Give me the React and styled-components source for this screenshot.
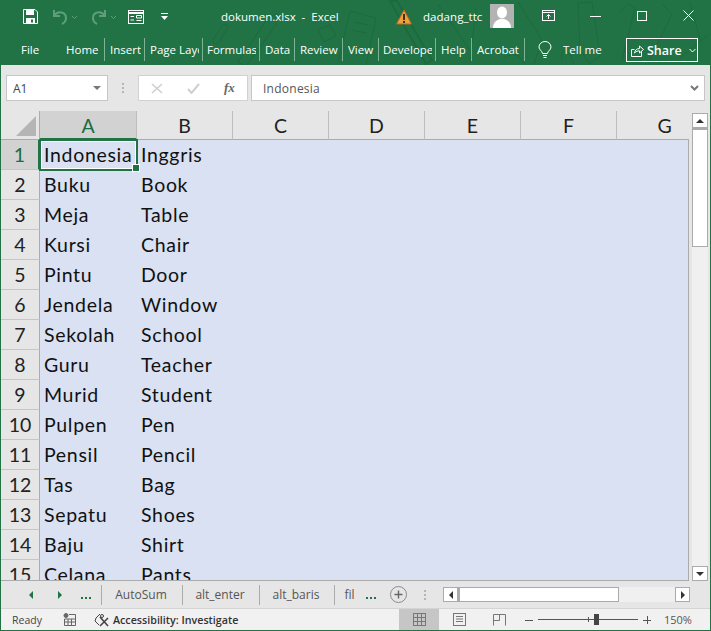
import styled, { createGlobalStyle } from 'styled-components';

const GlobalStyle = createGlobalStyle`
  html, body { margin: 0; padding: 0; background: #217346; }
  * { box-sizing: border-box; }
`;

const Window = styled.div`
  position: relative;
  width: 711px;
  height: 631px;
  display: flex;
  flex-direction: column;
  background: #217346;
  font-family: 'Open Sans', 'Noto Sans', sans-serif;
  overflow: hidden;
`;

const Doodles = styled.svg`
  position: absolute;
  left: 0;
  top: 0;
  pointer-events: none;
`;

const TitleBar = styled.div`
  position: relative;
  height: 33px;
  display: flex;
  align-items: center;
  color: #fff;
  flex: none;
`;

const QuickTools = styled.div`
  display: flex;
  align-items: center;
  flex: none;
  width: 221px;
  padding-left: 23px;
  height: 100%;
`;

const ToolSlot = styled.div`
  display: flex;
  align-items: center;
  flex: none;
  margin-left: ${({ $gap }) => $gap || 0}px;
`;

const TitleText = styled.div`
  width: 175px;
  flex: none;
  font-size: 11.5px;
  white-space: pre;
  color: #fff;
  margin-top: -1px;
`;

const UserName = styled.div`
  width: 67px;
  flex: none;
  font-size: 11.5px;
  margin-left: 11px;
  color: #fff;
  letter-spacing: 0.05px;
`;

const Avatar = styled.div`
  width: 24px;
  height: 24px;
  flex: none;
  background: #b3b3b3;
  overflow: hidden;
  margin-top: -2px;
`;

const WindowButtons = styled.div`
  display: flex;
  align-items: center;
  flex: none;
  margin-left: 10px;
  margin-top: -2px;
`;

const WinBtn = styled.div`
  width: ${({ $w }) => $w || 46}px;
  display: flex;
  justify-content: center;
`;

const Ribbon = styled.div`
  position: relative;
  height: 32px;
  display: flex;
  align-items: flex-start;
  flex: none;
  padding-top: 5px;
`;

const FileTab = styled.div`
  width: 66px;
  flex: none;
  padding-left: 21px;
  color: #fff;
  font-size: 11.5px;
  line-height: 23px;
`;

const RibbonTab = styled.div`
  width: ${({ $w }) => $w}px;
  flex: none;
  height: 23px;
  line-height: 23px;
  color: #fff;
  font-size: 11.5px;
  padding-left: ${({ $pl }) => $pl ?? 5}px;
  padding-right: 3px;
  border-right: 1px solid #7fb396;
`;

const TabLabel = styled.div`
  white-space: nowrap;
  overflow: hidden;
`;

const TellMe = styled.div`
  display: flex;
  align-items: center;
  flex: none;
  height: 23px;
  color: #fff;
  font-size: 11.5px;
  margin-left: 13px;
  gap: 11px;
  width: 88px;
`;

const ShareBtn = styled.div`
  width: 72px;
  flex: none;
  height: 24px;
  border: 1px solid #fff;
  display: flex;
  align-items: center;
  padding-left: 4px;
  gap: 3px;
  color: #fff;
  font-size: 12.5px;
  font-weight: 600;
`;

const Body = styled.div`
  flex: 1;
  margin: 0 1px 1px 1px;
  background: #e6e6e6;
  display: flex;
  flex-direction: column;
  min-height: 0;
  position: relative;
`;

const FormulaBar = styled.div`
  height: 46px;
  flex: none;
  display: flex;
  align-items: flex-start;
  padding: 10px 0 0 5px;
`;

const NameBox = styled.div`
  width: 102px;
  height: 26px;
  background: #fff;
  border: 1px solid #c6c6c6;
  display: flex;
  align-items: center;
  justify-content: space-between;
  padding: 0 6px;
  font-size: 12px;
  color: #444;
`;

const Caret = styled.div`
  width: 0;
  height: 0;
  border-left: 4px solid transparent;
  border-right: 4px solid transparent;
  border-top: 4px solid #777;
`;

const Dots = styled.div`
  width: 30px;
  height: 26px;
  flex: none;
  display: flex;
  flex-direction: column;
  align-items: center;
  justify-content: center;
  gap: 2px;
  & > span { width: 2px; height: 2px; background: #b5b5b5; }
`;

const TabDots = styled(Dots)`
  width: 36px;
  height: 16px;
`;

const FxBox = styled.div`
  width: 110px;
  height: 26px;
  background: #fff;
  border: 1px solid #d2d2d2;
  display: flex;
  align-items: center;
  padding-left: 12px;
  gap: 24px;
`;

const FxLabel = styled.span`
  font-family: 'Liberation Serif', serif;
  font-style: italic;
  font-weight: 700;
  font-size: 13px;
  color: #666;
`;

const FormulaInput = styled.div`
  width: 454px;
  height: 26px;
  margin-left: 3px;
  background: #fff;
  border: 1px solid #c6c6c6;
  display: flex;
  align-items: center;
  justify-content: space-between;
  padding: 0 5px 0 11px;
  font-size: 12px;
  color: #555;
  letter-spacing: 0.25px;
`;

const SheetArea = styled.div`
  height: 470px;
  flex: none;
  display: flex;
`;

const GridWrap = styled.div`
  position: relative;
  width: 688px;
  height: 470px;
  overflow: hidden;
  display: grid;
  grid-template-columns: 39px 97px 96px 96px 96px 96px 96px 96px;
  grid-auto-rows: 30px;
  grid-template-rows: 29px;
  font-family: Lato, 'Liberation Sans', sans-serif;
  flex: none;
  border-bottom: 1px solid #ababab;
  &::after {
    content: '';
    position: absolute;
    right: 0;
    top: 28px;
    bottom: 0;
    width: 1px;
    background: #ababab;
    z-index: 2;
  }
`;

const Corner = styled.div`
  background: #e6e6e6;
  border-right: 1px solid #ababab;
  border-bottom: 1px solid #ababab;
  display: flex;
  align-items: flex-end;
  justify-content: flex-end;
  padding: 0 3px 3px 0;
  &::after {
    content: '';
    width: 0;
    height: 0;
    border-left: 20px solid transparent;
    border-bottom: 20px solid #b5b5b5;
  }
`;

const ColHead = styled.div`
  background: ${({ $active }) => ($active ? '#d2d2d2' : '#e6e6e6')};
  border-right: 1px solid ${({ $last }) => ($last ? 'transparent' : '#bdbdbd')};
  border-bottom: ${({ $active }) => ($active ? '2px solid #217346' : '1px solid #ababab')};
  color: ${({ $active }) => ($active ? '#1c6b41' : '#222')};
  font-size: 19.5px;
  line-height: 29px;
  text-align: center;
`;

const RowHead = styled.div`
  background: ${({ $active }) => ($active ? '#d2d2d2' : '#e6e6e6')};
  border-right: ${({ $active }) => ($active ? '2px solid #217346' : '1px solid #ababab')};
  border-bottom: 1px solid #c6c6c6;
  color: ${({ $active }) => ($active ? '#1c6b41' : '#222')};
  font-size: 19.5px;
  line-height: 30px;
  text-align: center;
`;

const Cell = styled.div`
  position: relative;
  background: #d9e1f2;
  color: #111;
  font-size: 19.5px;
  line-height: 30px;
  padding-left: 4px;
  white-space: nowrap;
  letter-spacing: 0.68px;
`;

const ActiveCell = styled(Cell)`
  outline: 2px solid #217346;
  outline-offset: -1px;
  z-index: 1;
  overflow: visible;
  box-shadow: inset 0 0 0 2px #fff;
  &::after {
    content: '';
    position: absolute;
    right: -3px;
    bottom: -2px;
    width: 6px;
    height: 6px;
    background: #217346;
    border: 1px solid #fff;
  }
`;

const VScroll = styled.div`
  width: 16px;
  margin-left: 3px;
  padding-top: 2px;
  display: flex;
  flex-direction: column;
  flex: none;
`;

const ScrollBtn = styled.div`
  height: 15px;
  background: #fff;
  border: 1px solid #ababab;
  display: flex;
  align-items: center;
  justify-content: center;
  flex: none;
`;

const VThumb = styled.div`
  height: 119px;
  background: #fff;
  border: 1px solid #ababab;
  border-top-width: 2px;
  flex: none;
`;

const VTrack = styled.div`
  flex: 1;
  background: #f0f0f0;
`;

const Spacer = styled.div`
  flex: 1;
`;

const TabsBar = styled.div`
  height: 27px;
  flex: none;
  display: flex;
  align-items: center;
  background: #e6e6e6;
  padding-right: 20px;
`;

const NavArrows = styled.div`
  width: 100px;
  flex: none;
  display: flex;
  align-items: center;
  padding-left: 28px;
`;

const Ellipsis = styled.div`
  display: flex;
  flex: none;
  gap: 2px;
  width: 10px;
  margin-top: 6px;
  & > span { width: 2px; height: 2px; background: #217346; }
`;

const SheetTab = styled.div`
  height: 20px;
  width: ${({ $w }) => $w}px;
  flex: none;
  border-left: 1px solid #ababab;
  font-size: 12px;
  line-height: 19px;
  padding-right: 2px;
  color: #555;
  text-align: center;
  white-space: nowrap;
  overflow: hidden;
`;

const AddSheet = styled.div`
  width: 17px;
  height: 17px;
  flex: none;
  border: 1px solid #8a8a8a;
  border-radius: 50%;
  color: #666;
  display: flex;
  align-items: center;
  justify-content: center;
  margin-left: 14px;
`;

const HScroll = styled.div`
  flex: 1;
  height: 15px;
  display: flex;
  background: #f0f0f0;
`;

const HBtn = styled.div`
  width: 15px;
  height: 15px;
  background: #fff;
  border: 1px solid #ababab;
  display: flex;
  align-items: center;
  justify-content: center;
  flex: none;
`;

const HThumb = styled.div`
  width: 161px;
  height: 15px;
  background: #fff;
  border: 1px solid #ababab;
  border-left-width: 2px;
  flex: none;
`;

const StatusBar = styled.div`
  height: 22px;
  flex: none;
  background: #f1f1f1;
  border-top: 1px solid #d4d4d4;
  display: flex;
  align-items: center;
  font-size: 10.5px;
  color: #444;
`;

const ReadyText = styled.div`
  width: 62px;
  flex: none;
  padding-left: 11px;
`;

const AccessText = styled.div`
  font-size: 10.7px;
  font-weight: 600;
  color: #333;
  margin-left: 3px;
  width: 286px;
  flex: none;
`;

const ViewBtn = styled.div`
  width: 40px;
  flex: none;
  height: 100%;
  display: flex;
  align-items: center;
  justify-content: center;
  background: ${({ $active }) => ($active ? '#c6c6c6' : 'transparent')};
`;

const Zoom = styled.div`
  display: flex;
  align-items: center;
  flex: none;
  margin-left: 6px;
  gap: 5px;
`;

const ZoomTrack = styled.div`
  position: relative;
  width: 100px;
  height: 1px;
  background: #555;
`;

const ZoomThumb = styled.div`
  position: absolute;
  left: 56px;
  top: -5px;
  width: 5px;
  height: 11px;
  background: #444;
`;

const ZoomTick = styled.div`
  position: absolute;
  left: 50px;
  top: -2px;
  width: 1px;
  height: 5px;
  background: #555;
`;

const ZoomValue = styled.div`
  margin-left: 13px;
  font-size: 11px;
  color: #555;
  flex: none;
`;

const rows = [
  ['Indonesia', 'Inggris'], ['Buku', 'Book'], ['Meja', 'Table'], ['Kursi', 'Chair'],
  ['Pintu', 'Door'], ['Jendela', 'Window'], ['Sekolah', 'School'], ['Guru', 'Teacher'],
  ['Murid', 'Student'], ['Pulpen', 'Pen'], ['Pensil', 'Pencil'], ['Tas', 'Bag'],
  ['Sepatu', 'Shoes'], ['Baju', 'Shirt'], ['Celana', 'Pants'],
];
const cols = ['A', 'B', 'C', 'D', 'E', 'F', 'G'];
const tabs = [
  ['Home', 39, 0], ['Insert', 40], ['Page Layout', 58], ['Formulas', 57, 4], ['Data', 35],
  ['Review', 48], ['View', 36], ['Developer', 57, 4], ['Help', 36], ['Acrobat', 53],
];

const Tri = ({ dir, color = '#333', size = 4 }) => {
  const pts = {
    up: `0,${size} ${size},0 ${size * 2},${size}`,
    down: `0,0 ${size * 2},0 ${size},${size}`,
    left: `${size},0 ${size},${size * 2} 0,${size}`,
    right: `0,0 0,${size * 2} ${size},${size}`,
  }[dir];
  const horiz = dir === 'up' || dir === 'down';
  return (
    <svg width={horiz ? size * 2 : size} height={horiz ? size : size * 2}>
      <polygon points={pts} fill={color} />
    </svg>
  );
};

const DoodleArt = () => (
  <Doodles width="711" height="65" fill="none" stroke="#1c6a3e" strokeWidth="1">
    <path d="M238 62 L268 18 L278 14 L276 25 L246 66 Z" />
    <path d="M214 38 L222 26 C226 22 229 25 227 29 L219 42 C216 46 211 43 214 38" />
    <path d="M318 30 L330 25 L336 36 L324 42 Z" />
    <path d="M338 62 L350 11 L376 18 L366 65" />
    <path d="M354 22 L368 25 M352 30 L366 33" />
    <path d="M390 1 L397 1 L432 60 L426 64 Z" strokeWidth="2" />
    <path d="M470 62 L476 8 M438 4 L470 50" />
    <path d="M518 2 L542 40 L534 64" />
    <path d="M578 3 L592 2 L600 56 L590 64 L580 50 Z" />
    <path d="M562 60 C560 50 566 48 570 54 L574 64" />
    <path d="M620 12 L628 4 L635 8 L622 60" />
    <path d="M662 4 L672 14 L650 60 M690 2 L700 40 M680 58 L708 35" />
    <path d="M505 58 C512 52 520 54 524 64" />
  </Doodles>
);

const App = () => (
  <>
    <GlobalStyle />
    <Window>
      <DoodleArt />
      <TitleBar>
        <QuickTools>
          <ToolSlot>
            <svg width="15" height="15" viewBox="0 0 15 15">
              <path d="M0.5 0.5H12L14.5 3V14.5H0.5Z" fill="none" stroke="#fff" />
              <rect x="3" y="1" width="8" height="5" fill="#fff" />
              <rect x="3" y="9" width="9" height="5.5" fill="#fff" />
              <rect x="8" y="10.5" width="2" height="3" fill="#217346" />
            </svg>
          </ToolSlot>
          <ToolSlot $gap={14}>
            <svg width="26" height="16" viewBox="0 0 26 16" fill="none" stroke="#5f9e7d" strokeWidth="2">
              <path d="M2 1V7H8M2 7C6 1 14 3 14 9C14 12 12 14 10 15" />
              <path d="M20 7L22.5 9.5L25 7" strokeWidth="1" />
            </svg>
          </ToolSlot>
          <ToolSlot $gap={13}>
            <svg width="26" height="16" viewBox="0 0 26 16" fill="none" stroke="#5f9e7d" strokeWidth="2">
              <path d="M14 1V7H8M14 7C10 1 2 3 2 9C2 12 4 14 6 15" />
              <path d="M20 7L22.5 9.5L25 7" strokeWidth="1" />
            </svg>
          </ToolSlot>
          <ToolSlot $gap={11}>
            <svg width="16" height="14" viewBox="0 0 16 14" fill="none" stroke="#fff">
              <rect x="0.5" y="0.5" width="15" height="13" />
              <path d="M0.5 3H15.5" strokeWidth="2" />
              <path d="M2.5 6.5H6M2.5 10H6M8.5 5.5H13.5V8H8.5ZM8.5 10.5H13.5" />
            </svg>
          </ToolSlot>
          <ToolSlot $gap={17}>
            <svg width="7" height="8" viewBox="0 0 7 8" fill="#fff">
              <rect x="0" y="0" width="7" height="1" />
              <polygon points="0,3 7,3 3.5,7" />
            </svg>
          </ToolSlot>
        </QuickTools>
        <TitleText>dokumen.xlsx  -  Excel</TitleText>
        <svg width="16" height="16" viewBox="0 0 16 16">
          <polygon points="8,1 15.5,15 0.5,15" fill="#e8a33d" stroke="#c9601a" />
          <rect x="7" y="5" width="2" height="6" fill="#4a2c10" />
          <rect x="7" y="12" width="2" height="2" fill="#4a2c10" />
        </svg>
        <UserName>dadang_ttc</UserName>
        <Avatar>
          <svg width="24" height="24" viewBox="0 0 24 24" fill="#fff">
            <ellipse cx="12" cy="8.5" rx="5" ry="6" />
            <path d="M3 24C3 18 7 16 10 15H14C17 16 21 18 21 24Z" />
          </svg>
        </Avatar>
        <WindowButtons>
          <WinBtn $w={48}>
            <svg width="13" height="11" viewBox="0 0 13 11" fill="none" stroke="#fff">
              <rect x="0.5" y="0.5" width="12" height="10" />
              <path d="M0.5 2.5H12.5M6.5 9V4.5M4.5 6.5L6.5 4.5L8.5 6.5" />
            </svg>
          </WinBtn>
          <WinBtn $w={47}>
            <svg width="11" height="10" viewBox="0 0 11 10" stroke="#fff"><path d="M0 5.5H11" /></svg>
          </WinBtn>
          <WinBtn $w={46}>
            <svg width="10" height="10" viewBox="0 0 10 10" fill="none" stroke="#fff"><rect x="0.5" y="0.5" width="9" height="9" /></svg>
          </WinBtn>
          <WinBtn $w={46}>
            <svg width="11" height="11" viewBox="0 0 11 11" stroke="#fff"><path d="M0.5 0.5L10.5 10.5M10.5 0.5L0.5 10.5" /></svg>
          </WinBtn>
        </WindowButtons>
      </TitleBar>
      <Ribbon>
        <FileTab>File</FileTab>
        {tabs.map(([name, w, pl]) => (
          <RibbonTab key={name} $w={w} $pl={pl}><TabLabel>{name}</TabLabel></RibbonTab>
        ))}
        <TellMe>
          <svg width="14" height="18" viewBox="0 0 14 18" fill="none" stroke="#fff">
            <path d="M4.5 12.5C4 9.5 1 9 1 6A6 5.5 0 0 1 13 6C13 9 10 9.5 9.5 12.5Z" />
            <path d="M5 14.5H9M5.5 16.5H8.5" />
          </svg>
          <span>Tell me</span>
        </TellMe>
        <ShareBtn>
          <svg width="13" height="13" viewBox="0 0 13 13" fill="none" stroke="#fff">
            <path d="M3.5 5.5H0.5V12.5H10.5V7.5" />
            <path d="M3.5 9C4 6 6 4.5 8.5 4.5V2L12.5 5.5L8.5 9V6.8C6.5 6.8 5 7.5 3.5 9Z" />
          </svg>
          <span>Share</span>
          <ToolSlot $gap={4}>
            <svg width="7" height="5" viewBox="0 0 7 5" fill="none" stroke="#fff"><path d="M0.5 1L3.5 4L6.5 1" /></svg>
          </ToolSlot>
        </ShareBtn>
      </Ribbon>
      <Body>
        <FormulaBar>
          <NameBox>A1<Caret /></NameBox>
          <Dots><span /><span /><span /></Dots>
          <FxBox>
            <svg width="12" height="11" viewBox="0 0 12 11" stroke="#cfcfcf" strokeWidth="1.6"><path d="M1 1L11 10M11 1L1 10" /></svg>
            <svg width="13" height="11" viewBox="0 0 13 11" fill="none" stroke="#cfcfcf" strokeWidth="2"><path d="M1 6L4.5 10L12 1" /></svg>
            <FxLabel>fx</FxLabel>
          </FxBox>
          <FormulaInput>
            Indonesia
            <svg width="9" height="6" viewBox="0 0 9 6" fill="none" stroke="#777" strokeWidth="2"><path d="M1 1L4.5 4.5L8 1" /></svg>
          </FormulaInput>
        </FormulaBar>
        <SheetArea>
          <GridWrap>
            <Corner />
            {cols.map((c, i) => (
              <ColHead key={c} $active={i === 0} $last={i === 6}>{c}</ColHead>
            ))}
            {rows.map(([a, b], i) => [
              <RowHead key={`h${i}`} $active={i === 0}>{i + 1}</RowHead>,
              i === 0 ? <ActiveCell key={`a${i}`}>{a}</ActiveCell> : <Cell key={`a${i}`}>{a}</Cell>,
              <Cell key={`b${i}`}>{b}</Cell>,
              ...cols.slice(2).map((c) => <Cell key={c + i} />),
            ])}
          </GridWrap>
          <VScroll>
            <ScrollBtn><Tri dir="up" size={4} /></ScrollBtn>
            <VThumb />
            <VTrack />
            <ScrollBtn><Tri dir="down" size={4} /></ScrollBtn>
          </VScroll>
        </SheetArea>
        <TabsBar>
          <NavArrows>
            <Tri dir="left" color="#217346" size={4} />
            <ToolSlot $gap={25}><Tri dir="right" color="#217346" size={4} /></ToolSlot>
            <ToolSlot $gap={19}><Ellipsis><span /><span /><span /></Ellipsis></ToolSlot>
          </NavArrows>
          <SheetTab $w={81}>AutoSum</SheetTab>
          <SheetTab $w={77}>alt_enter</SheetTab>
          <SheetTab $w={75}>alt_baris</SheetTab>
          <SheetTab $w={32}>fil</SheetTab>
          <Ellipsis><span /><span /><span /></Ellipsis>
          <AddSheet>
            <svg width="9" height="9" viewBox="0 0 9 9" stroke="#666" strokeWidth="1.4"><path d="M4.5 0.5V8.5M0.5 4.5H8.5" /></svg>
          </AddSheet>
          <TabDots><span /><span /><span /></TabDots>
          <HScroll>
            <HBtn><Tri dir="left" size={4} /></HBtn>
            <HThumb />
            <Spacer />
            <HBtn><Tri dir="right" size={4} /></HBtn>
          </HScroll>
        </TabsBar>
        <StatusBar>
          <ReadyText>Ready</ReadyText>
          <svg width="13" height="13" viewBox="0 0 13 13" fill="none" stroke="#666">
            <circle cx="3" cy="2.5" r="2" fill="#666" />
            <path d="M6 1.5H12.5V12.5H1.5V6H12.5M1.5 9H12.5M5 6V12.5M8.5 6V12.5" />
          </svg>
          <ToolSlot $gap={18}>
            <svg width="16" height="14" viewBox="0 0 16 14" fill="none" stroke="#444">
              <path d="M6 1L2 5L1 8L5 12" />
              <path d="M6 4L14 13M14 5L6 13" strokeWidth="1.6" />
              <circle cx="8" cy="3" r="1.5" />
            </svg>
          </ToolSlot>
          <AccessText>Accessibility: Investigate</AccessText>
          <ViewBtn $active>
            <svg width="13" height="13" viewBox="0 0 13 13" fill="none" stroke="#777">
              <rect x="0.5" y="0.5" width="12" height="12" />
              <path d="M4.5 0.5V12.5M8.5 0.5V12.5M0.5 4.5H12.5M0.5 8.5H12.5" />
            </svg>
          </ViewBtn>
          <ViewBtn>
            <svg width="13" height="13" viewBox="0 0 13 13" fill="none" stroke="#777">
              <rect x="0.5" y="0.5" width="12" height="12" />
              <path d="M3 3.5H10M3 6H10M3 8.5H10" />
            </svg>
          </ViewBtn>
          <ViewBtn>
            <svg width="13" height="12" viewBox="0 0 13 12" fill="none" stroke="#777">
              <path d="M0.5 11.5V0.5H12.5V11.5M0.5 6.5H6.5V0.5" />
            </svg>
          </ViewBtn>
          <Zoom>
            <svg width="8" height="8" stroke="#555"><path d="M0 4.5H8" /></svg>
            <ZoomTrack><ZoomTick /><ZoomThumb /></ZoomTrack>
            <svg width="8" height="8" stroke="#555"><path d="M0 4.5H8M4.5 0V8" /></svg>
          </Zoom>
          <ZoomValue>150%</ZoomValue>
        </StatusBar>
      </Body>
    </Window>
  </>
);

export default App;
